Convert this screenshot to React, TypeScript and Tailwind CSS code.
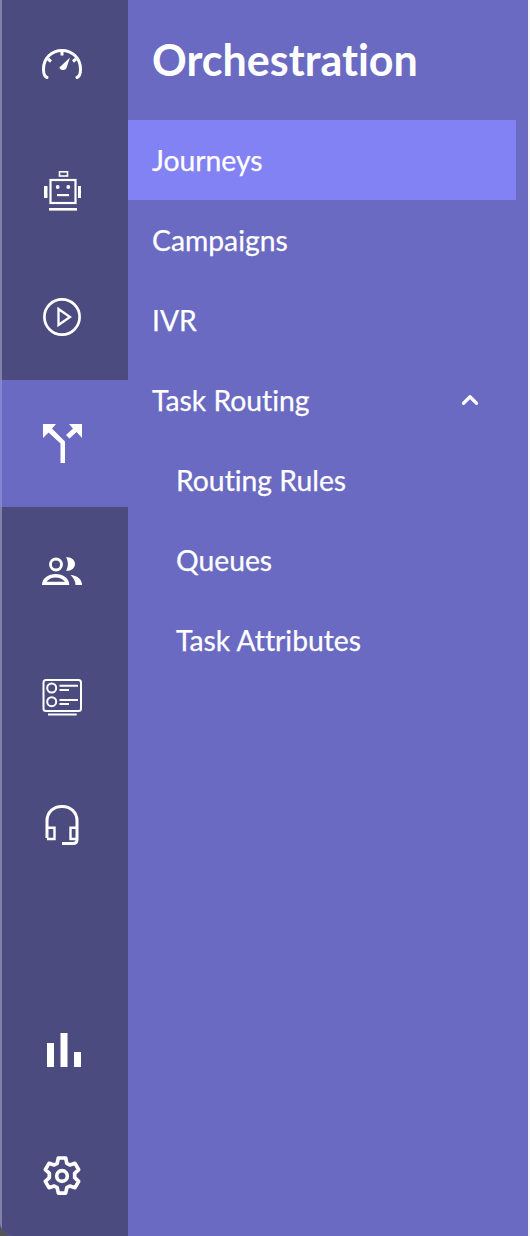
import React from "react";
import { ChevronUp } from "lucide-react";

const font = { fontFamily: "Lato, sans-serif" };

function GaugeIcon() {
  return (
    <svg width="40" height="30" viewBox="0 0 40 30" fill="none" stroke="white" strokeWidth="3">
      <path d="M5 28.500 C2.500 27.500 1.500 25 1.500 20 C1.500 9.500 9.500 1.500 20 1.500 C30.500 1.500 38.500 9.500 38.500 20 C38.500 25 37.500 27.500 35 28.500" strokeLinecap="round" />
      <path d="M20 1.500v5M6 10l3 2.500M34 10l-3 2.500" />
      <path d="M28 8.500 L24.500 19 C23 22 18.500 21.500 17.500 19 C17.500 18 18 17.500 19 17 Z" fill="white" stroke="none" />
    </svg>
  );
}

function RobotIcon() {
  return (
    <svg width="37" height="40" viewBox="0 0 37 40" fill="white">
      <rect x="15.500" y="0.800" width="8" height="4.200" fill="none" stroke="white" strokeWidth="1.600" />
      <rect x="6.500" y="9" width="25" height="23" fill="none" stroke="white" strokeWidth="2.200" />
      <circle cx="13.700" cy="16" r="1.900" />
      <circle cx="24.300" cy="16" r="1.900" />
      <rect x="13" y="23" width="12" height="2.200" />
      <rect x="0" y="15" width="3.500" height="12" />
      <rect x="34" y="15" width="3" height="12" />
      <rect x="5" y="37" width="28" height="2.600" />
    </svg>
  );
}

function PlayIcon() {
  return (
    <svg width="38" height="38" viewBox="0 0 38 38" fill="none" stroke="white" strokeWidth="2.700">
      <circle cx="19" cy="19" r="17.600" />
      <path d="M15.500 11 L27 19 L15.500 27 Z" strokeWidth="2.300" />
    </svg>
  );
}

function SplitIcon() {
  return (
    <svg width="39" height="39" viewBox="0 0 39 39" fill="white">
      <path d="M0 0 H13 L9 4.500 L22 17.500 V39 H17.500 V19.500 L5.500 8.500 L0 14 Z" />
      <path d="M39 0 H26 L30 4.500 L23 11 L26.500 14.500 L33.500 8 L39 14 Z" />
    </svg>
  );
}

function PeopleIcon() {
  return (
    <svg width="40" height="28" viewBox="0 0 40 28" fill="none">
      <circle cx="14" cy="7.500" r="5.500" stroke="white" strokeWidth="2.800" />
      <path d="M24 0.300 C29 -0.500 33 3 33 7 C33 11 29 14.500 24 13.700 C26.500 10 26.500 4 24 0.300 Z" fill="white" />
      <path d="M0 28 C0 21 6.500 17 13.700 17 C21 17 27.300 21 27.300 28 Z M4.500 24.800 H23 C21 22 17 20.500 13.700 20.500 C10 20.500 6.500 22 4.500 24.800 Z" fill="white" fillRule="evenodd" />
      <path d="M28.500 18 C35 18.500 40 22 40 28 H33.500 C33.500 24 31.500 21 28.500 18 Z" fill="white" />
    </svg>
  );
}

function ListIcon() {
  return (
    <svg width="40" height="37" viewBox="0 0 40 37" fill="none" stroke="white" strokeWidth="2">
      <rect x="1.500" y="1" width="37.500" height="31" rx="2.500" />
      <circle cx="9.700" cy="9" r="4.500" />
      <circle cx="9.700" cy="22.700" r="4.500" />
      <path d="M17.500 6.700H36M17.500 21H36" />
      <path d="M17.500 11H27M17.500 25H27" />
      <path d="M6 35.500H34.700" />
    </svg>
  );
}

function HeadsetIcon() {
  return (
    <svg width="34" height="40" viewBox="0 0 34 40" fill="none" stroke="white" strokeWidth="3">
      <path d="M2 33 V16 C2 7 8.500 1.500 17 1.500 C25.500 1.500 32 7 32 16 V34.500 C32 37.500 30.500 38.500 28 38.500 H17" />
      <path d="M2 22.700H9.500V34H2M32 22.700H25.500V34H32" strokeWidth="2.400" />
    </svg>
  );
}

function BarsIcon() {
  return (
    <svg width="34" height="34" viewBox="0 0 34 34" fill="white">
      <rect x="0" y="10" width="7" height="24" />
      <rect x="13.500" y="0" width="7" height="34" />
      <rect x="27" y="19" width="7" height="15" />
    </svg>
  );
}

function GearIcon() {
  return (
    <svg width="40" height="40" viewBox="0 0 24 24" fill="none" stroke="white" strokeWidth="2.200" strokeLinejoin="round">
      <path d="M9.800 1.200h4.400l.7 3.200 1.800 1 3.100-1 2.200 3.800-2.400 2.200v2.600l2.400 2.200-2.200 3.800-3.100-1-1.800 1-.7 3.300H9.800l-.7-3.300-1.800-1-3.100 1-2.200-3.800 2.400-2.200v-2.600L2 8.200l2.200-3.800 3.100 1 1.800-1z" />
      <circle cx="12" cy="12" r="3.200" />
    </svg>
  );
}

const rail = [
  { icon: <GaugeIcon />, h: "h-[127px]" },
  { icon: <RobotIcon />, h: "h-[127px]" },
  { icon: <PlayIcon />, h: "h-[126px]" },
  { icon: <SplitIcon />, h: "h-[127px]", active: true },
  { icon: <PeopleIcon />, h: "h-[127px]" },
  { icon: <ListIcon />, h: "h-[127px]" },
  { icon: <HeadsetIcon />, h: "h-[127px]" },
];

const rows = [
  { label: "Journeys", active: true },
  { label: "Campaigns" },
  { label: "IVR" },
  { label: "Task Routing", open: true },
  { label: "Routing Rules", sub: true },
  { label: "Queues", sub: true },
  { label: "Task Attributes", sub: true },
];

export default function App() {
  return (
    <div className="flex h-[1236px] w-[530px] overflow-hidden bg-[#555555] [font-variant-ligatures:none]" style={font}>
      <div className="flex h-full w-[528px] shrink-0 overflow-hidden rounded-bl-[14px] bg-[#6a6ac2]">
        <nav className="flex w-[128px] shrink-0 flex-col border-l-2 border-[#8181ad] bg-[#4c4b7f]">
          {rail.map((r, i) => (
            <div
              key={i}
              className={`flex ${r.h} items-center justify-center pr-[6px] ${r.active ? "-ml-[2px] border-l-2 border-[#8484d0] bg-[#6a6ac2]" : ""}`}
            >
              {r.icon}
            </div>
          ))}
          <div className="flex-1" />
          <div className="flex h-[124px] items-center justify-center pr-[2px]">
            <BarsIcon />
          </div>
          <div className="flex h-[124px] items-center justify-center pr-[6px] pt-1">
            <GearIcon />
          </div>
        </nav>
        <div className="flex-1 text-white">
          <h1 className="flex h-[120px] items-center px-6 pt-[1px] text-[43px] font-bold">Orchestration</h1>
          <ul className="w-[388px]">
            {rows.map((row) => (
              <li
                key={row.label}
                className={`flex h-[80px] items-center justify-between pr-[33px] text-[28.3px] [-webkit-text-stroke:0.25px_white] ${row.sub ? "pl-[48px]" : "pl-6"} ${row.active ? "bg-[#8282f5]" : ""}`}
              >
                <span>{row.label}</span>
                {row.open && <ChevronUp size={26} strokeWidth={3} />}
              </li>
            ))}
          </ul>
        </div>
      </div>
      <div className="h-full w-[2px] bg-[#f5f5f5]" />
    </div>
  );
}
